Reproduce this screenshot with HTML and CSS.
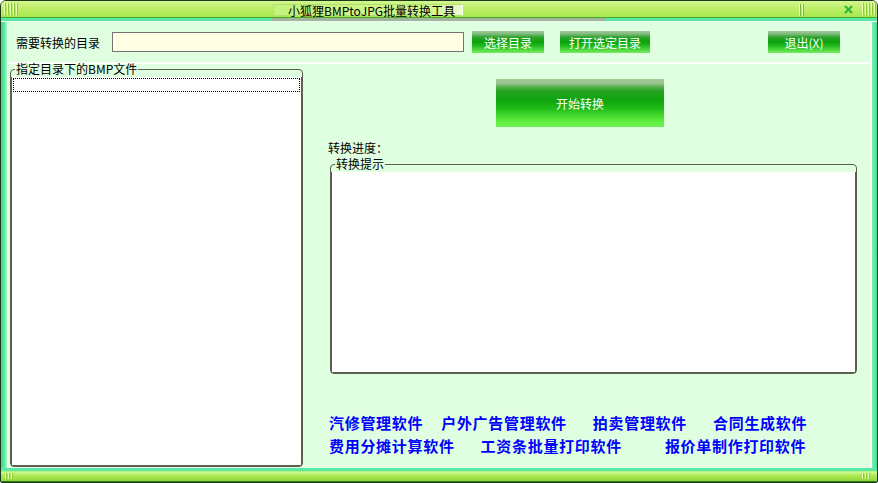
FILE: index.html
```html
<!DOCTYPE html>
<html lang="zh">
<head>
    <meta charset="UTF-8">
    <title>小狐狸BMPtoJPG批量转换工具</title>
    <link rel="stylesheet" href="styles.css">
</head>
<body>
    <div class="window">
        <div class="titlebar">
            <span class="grip"></span>
            <span class="caption">小狐狸BMPtoJPG批量转换工具</span>
            <span class="bars"></span>
            <svg class="close" width="9" height="9" viewBox="0 0 9 9">
                <path d="M1 1 L8 8 M8 1 L1 8" stroke="#22b83a" stroke-width="2" fill="none"/>
            </svg>
            <span class="grip grip-end"></span>
        </div>
        <div class="frame-top"></div>
        <div class="middle">
            <div class="edge-left"></div>
            <div class="client">
                <div class="toprow">
                    <span class="label">需要转换的目录</span>
                    <input type="text" class="dir" />
                    <button class="btn b1">选择目录</button>
                    <button class="btn b2">打开选定目录</button>
                    <button class="btn b3">退出(X)</button>
                </div>
                <div class="main">
                    <fieldset class="group files">
                        <legend>指定目录下的BMP文件</legend>
                        <div class="list">
                            <div class="focus"></div>
                        </div>
                    </fieldset>
                    <div class="pane">
                        <button class="btn start">开始转换</button>
                        <div class="progress">转换进度：</div>
                        <fieldset class="group tips">
                            <legend>转换提示</legend>
                            <div class="log"></div>
                        </fieldset>
                        <div class="links">
                            <div class="row">
                                <a class="link first">汽修管理软件</a>
                                <a class="link g18">户外广告管理软件</a>
                                <a class="link g26">拍卖管理软件</a>
                                <a class="link g26">合同生成软件</a>
                            </div>
                            <div class="row">
                                <a class="link first">费用分摊计算软件</a>
                                <a class="link g26">工资条批量打印软件</a>
                                <a class="link g43">报价单制作打印软件</a>
                            </div>
                        </div>
                    </div>
                </div>
            </div>
            <div class="edge-right"></div>
        </div>
        <div class="frame-bottom">
            <span class="grip small"></span>
            <span class="grip small grip-end"></span>
        </div>
    </div>
</body>
</html>
```

FILE: styles.css
```css
body{
    margin: 0;
    font-family: "Noto Sans CJK SC", "Noto Sans", sans-serif;
    font-size: 12px;
}
.window{
    width: 878px;
    height: 483px;
    box-sizing: border-box;
    border: 1px solid #1d3a1d;
    border-radius: 6px 6px 2px 2px;
    overflow: hidden;
    display: flex;
    flex-direction: column;
    background: #e0ffe0;
}

/* title bar */
.titlebar{
    height: 17px;
    box-sizing: border-box;
    border-bottom: 1px solid #4aa82a;
    background: linear-gradient(#d4f690, #bcee66 50%, #a8e84c);
    display: flex;
    align-items: flex-start;
}
.grip{
    margin: 2px 0 0 3px;
    width: 14px;
    height: 12px;
    background: repeating-linear-gradient(to right, #eaffb0 0 1px, #88cc3c 1px 2px, transparent 2px 3px);
}
.titlebar .grip-end{
    margin-left: 9px;
    width: 15px;
}
.caption{
    margin: 3px 0 0 255px;
    width: 190px;
    height: 12px;
    box-sizing: border-box;
    padding-left: 14px;
    line-height: 12px;
    color: #000;
    background: linear-gradient(to right, #c4f27a, #d2f690 85%, #eefcd0);
    border: 1px solid #b0e070;
    border-right-color: #f4fff0;
}
.bars{
    margin: 3px 0 0 auto;
    width: 5px;
    height: 12px;
    background: linear-gradient(to right, #f0ffc0 0 1px, #6cc034 1px 2px, transparent 2px 3px, #f0ffc0 3px 4px, #6cc034 4px 5px);
}
.close{
    margin: 4px 0 0 40px;
}

.frame-top{
    height: 4px;
    box-sizing: border-box;
    border-bottom: 1px solid #e8fff0;
    background: linear-gradient(to right, #5ae8a6 0 271px, #a2b69e 271px 605px, #5ae8a6 605px);
}
.middle{
    flex: 1;
    display: flex;
}
.edge-left{
    width: 7px;
    background: linear-gradient(to right, #3cd68a, #66eca8 55%, #a8f8cc 85%, #eafff2 86%);
}
.edge-right{
    width: 7px;
    background: linear-gradient(to right, #f2fff4 0 2px, #7cf2b8 2px, #48dc94);
}
.client{
    flex: 1;
    display: flex;
    flex-direction: column;
    background: #e0ffe0;
}

/* top row */
.toprow{
    height: 42px;
    box-sizing: border-box;
    border-bottom: 2px solid #fbfffb;
    padding-left: 8px;
    display: flex;
    align-items: center;
}
.label{
    width: 84px;
    color: #000;
}
.dir{
    margin-left: 12px;
    width: 352px;
    height: 20px;
    box-sizing: border-box;
    border: 1px solid #747474;
    background: #fffee4;
    padding: 0;
}
.btn{
    height: 22px;
    border: none;
    padding: 0;
    color: #fff;
    font-family: inherit;
    font-size: 12px;
    background: linear-gradient(#9cc898 0, #86bc84 12%, #2ea42e 28%, #0ea20e 48%, #1cb41c 64%, #4ad63a 84%, #7aea66 100%);
}
.b1{
    margin-left: 8px;
    width: 72px;
}
.b2{
    margin-left: 16px;
    width: 90px;
}
.b3{
    margin-left: 118px;
    width: 72px;
}

/* main area */
.main{
    flex: 1;
    display: flex;
}
.group{
    margin: 0;
    padding: 2px 0 0 0;
    border: 1px solid #5e5e4e;
    border-radius: 4px;
    display: flex;
    flex-direction: column;
}
.group legend{
    padding: 0 1px;
    margin-left: 4px;
    line-height: 12px;
    color: #000;
}
.files{
    margin: -1px 0 1px 2px;
    width: 293px;
    box-sizing: border-box;
}
.list{
    flex: 1;
    background: #fff;
    border: 1px solid #5e5e4e;
    border-top: none;
}
.focus{
    margin: 1px;
    height: 12px;
    border: 1px dotted #000;
}

.pane{
    flex: 1;
    padding: 15px 0 0 25px;
    display: flex;
    flex-direction: column;
    align-items: flex-start;
}
.start{
    margin-left: 168px;
    width: 168px;
    height: 48px;
    background: linear-gradient(#a2ca96 0, #98c48e 9%, #58b050 16%, #22a21e 26%, #0ea40e 44%, #22bc18 62%, #48dc30 78%, #62f040 90%, #74ee5c 100%);
}
.progress{
    margin-top: 14px;
    line-height: 14px;
    color: #000;
}
.tips{
    margin: 3px 0 0 2px;
    width: 527px;
    box-sizing: border-box;
}
.log{
    height: 200px;
    background: #fff;
    border: 1px solid #5e5e4e;
    border-top: none;
}

/* links */
.links{
    margin-top: 37px;
}
.row{
    display: flex;
    line-height: 23px;
    white-space: nowrap;
}
.link{
    color: #0000ff;
    font-size: 15px;
    font-weight: bold;
    letter-spacing: 0.7px;
    cursor: pointer;
}
.first{
    margin-left: 1px;
}
.g18{
    margin-left: 18px;
}
.g26{
    margin-left: 26px;
}
.g43{
    margin-left: 43px;
}

.frame-bottom{
    height: 14px;
    box-sizing: border-box;
    border-bottom: 1px solid #287a18;
    background: linear-gradient(#5ae8a6 0 3px, #aaf070 3px, #d4f894 5px, #b4ec5c 50%, #8ed838 100%);
    display: flex;
    align-items: flex-start;
}
.grip.small{
    margin: 5px 0 0 4px;
    width: 9px;
    height: 6px;
}
.frame-bottom .grip-end{
    margin-left: auto;
    margin-right: 6px;
}
```
